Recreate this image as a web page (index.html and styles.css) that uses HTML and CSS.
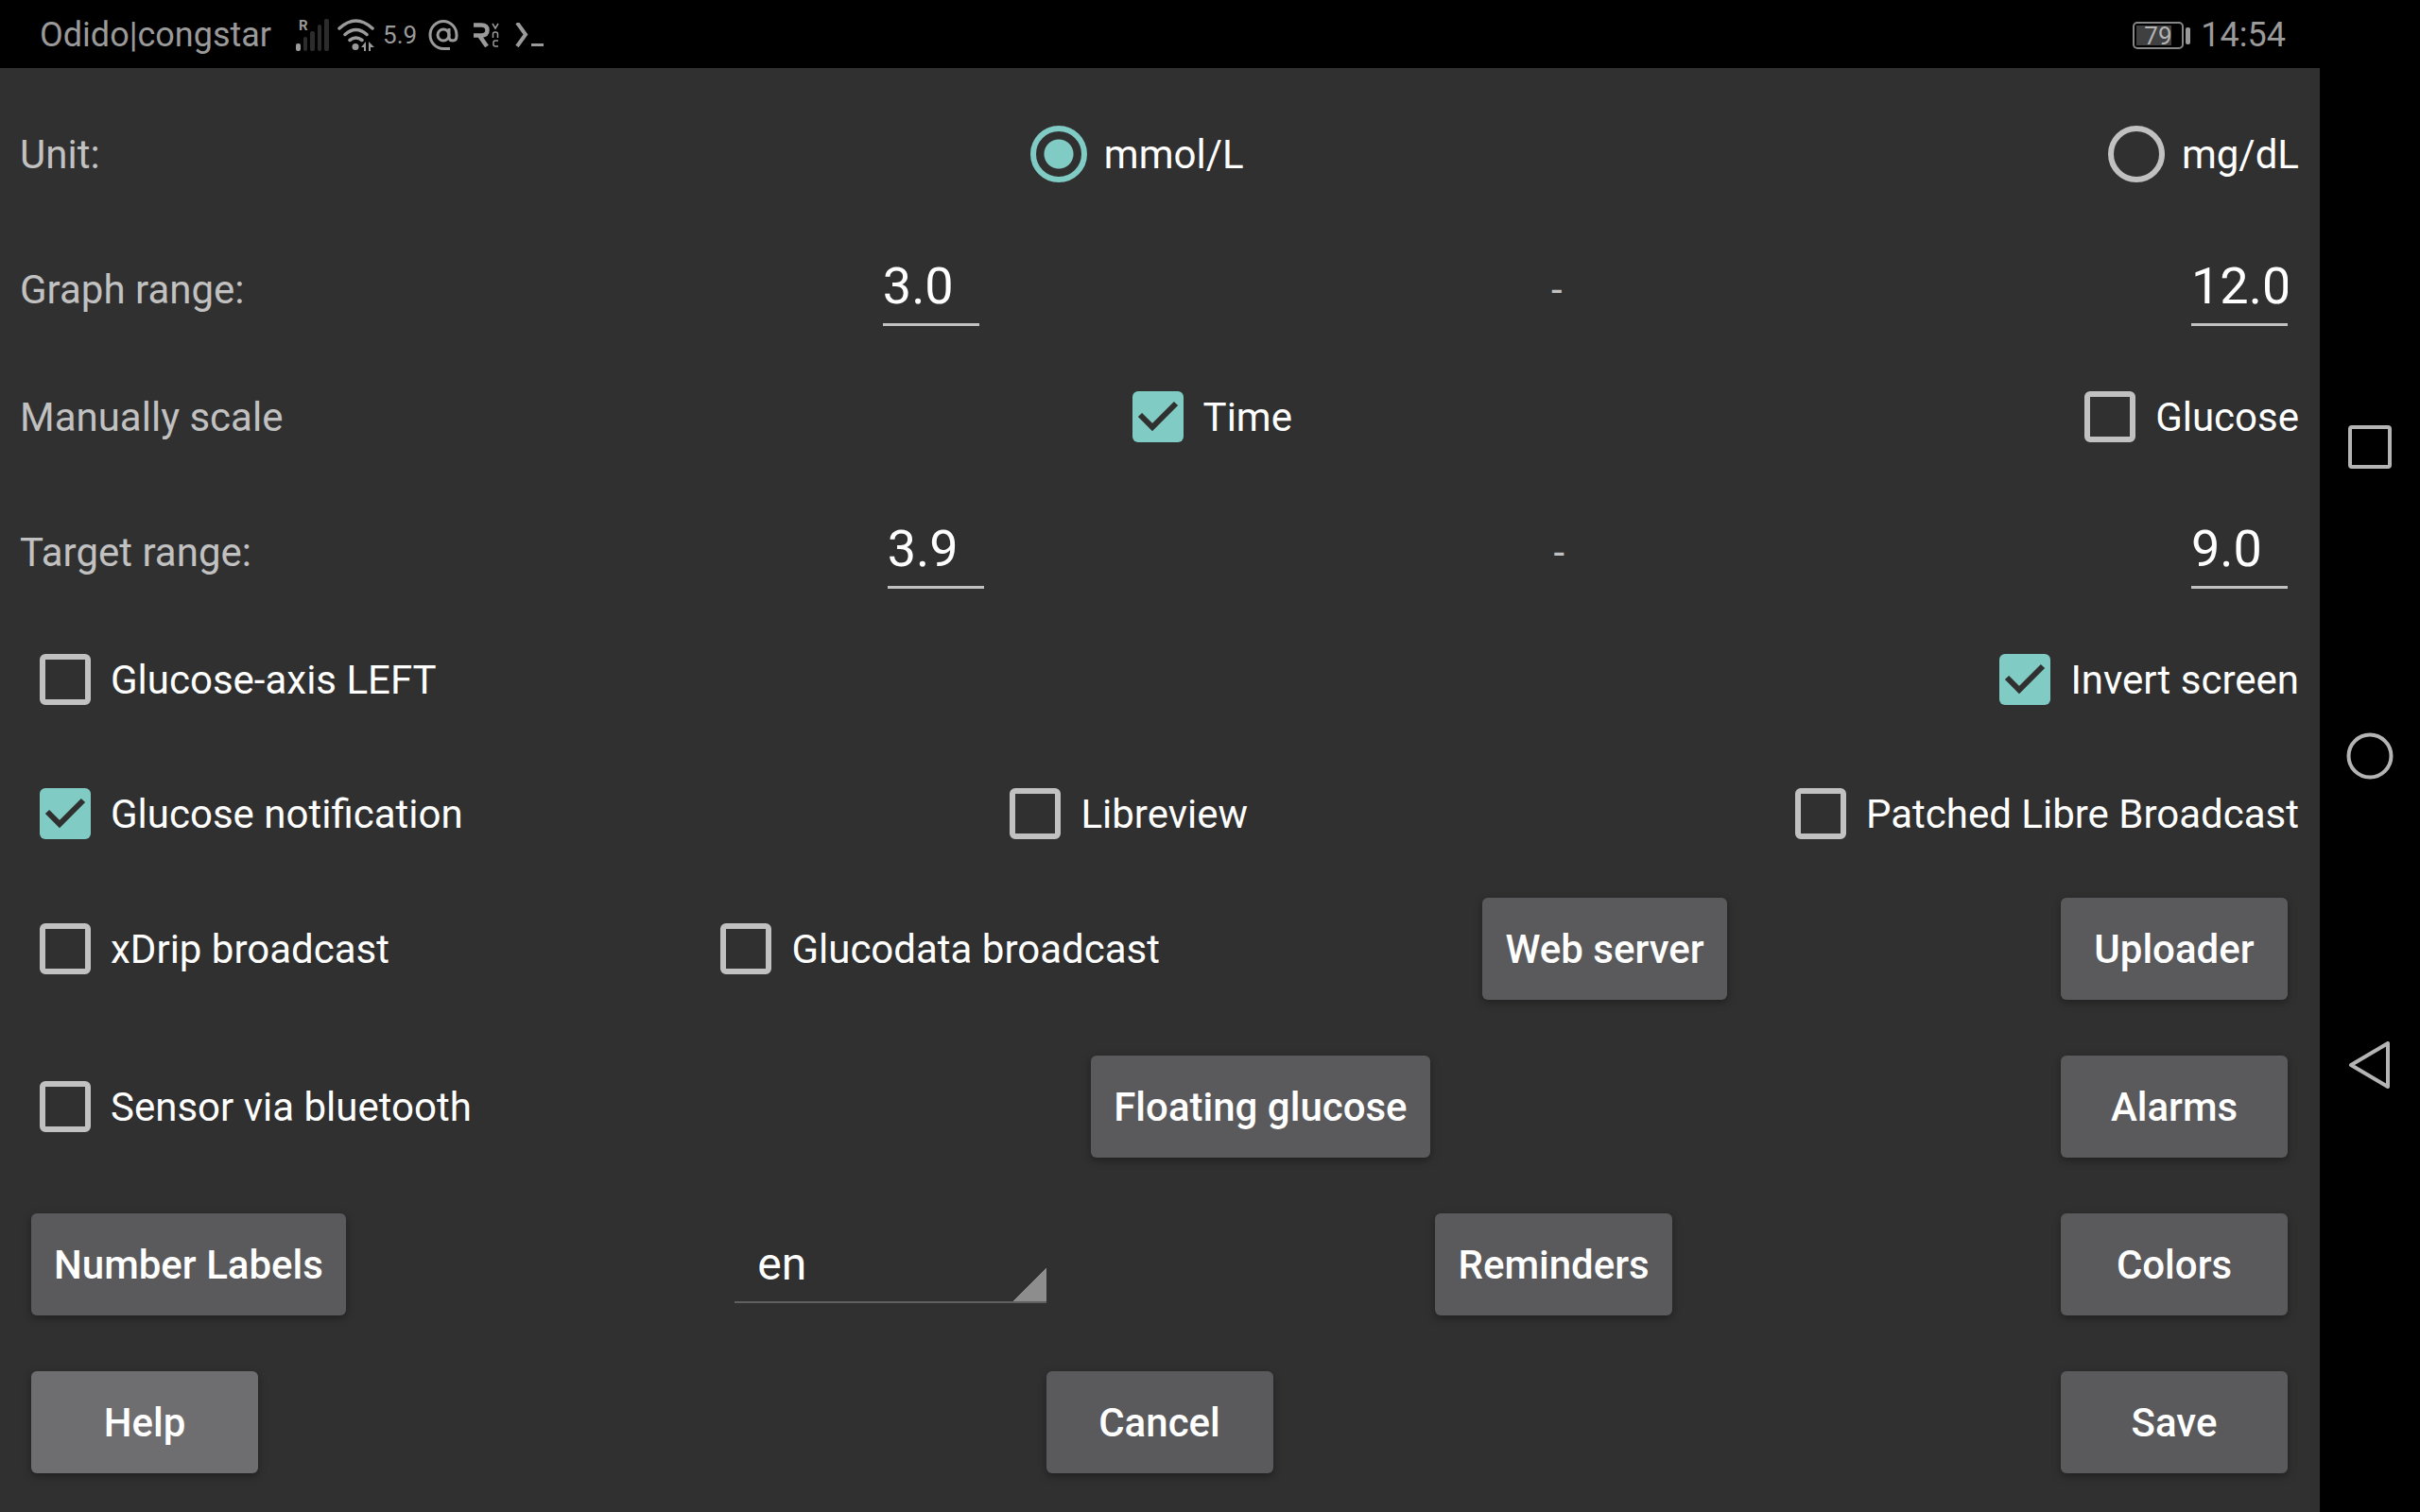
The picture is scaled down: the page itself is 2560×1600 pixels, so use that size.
FILE: index.html
```html
<!DOCTYPE html>
<html lang="en">
<head>
<meta charset="utf-8">
<title>Settings</title>
<link rel="stylesheet" href="styles.css">
</head>
<body>
<div class="screen">
  <div class="window">
    <header class="status">
      <div class="status-left">
        <span class="carrier">Odido|congstar</span>
        <svg class="signal" width="36" height="34" viewBox="0 0 36 34" aria-hidden="true">
          <text class="roam" x="3" y="12">R</text>
          <rect x="0" y="26" width="5" height="8" rx="2" fill="#9a9a9a"/>
          <g fill="#2c2c2c"><rect x="8" y="19" width="4" height="15" rx="2"/><rect x="15" y="13" width="5" height="21" rx="2"/><rect x="23" y="6" width="4" height="28" rx="2"/><rect x="30" y="0" width="5" height="34" rx="2"/></g>
        </svg>
        <svg class="wifi" width="40" height="34" viewBox="0 0 40 34" aria-hidden="true">
          <g fill="none" stroke="#9a9a9a" stroke-width="3.500" stroke-linecap="round"><path d="M2 10Q19.500 -6 37 10M8 16.500Q19.500 6.500 31 16.500M13 22.500Q19.500 17.500 26 22.500"/></g>
          <circle cx="19" cy="29.500" r="3.500" fill="#9a9a9a"/>
          <path d="M25 30l5-6v10h-2v-4zM33 24v10h2v-4h4z" fill="#9a9a9a"/>
        </svg>
        <span class="glucose">5.9</span>
        <svg class="at" width="32" height="32" viewBox="0 0 32 32" aria-hidden="true">
          <g fill="none" stroke="#9a9a9a" stroke-width="3"><path d="M23 30.500H16A14 14.500 0 1 1 30 16v1Q30 22 26 22T22 18V9"/><circle cx="16" cy="16" r="6"/></g>
        </svg>
        <svg class="vnc" width="28" height="26" viewBox="0 0 28 26" aria-hidden="true">
          <path d="M0 2.500H8Q14.500 2.500 14.500 8T8 13.500H6L14 25M0 13.500H7" fill="none" stroke="#9a9a9a" stroke-width="4.500"/>
          <path d="M20 1l3 5 3-5M20.500 16v-4q0-2 2-2h1q2 0 2 2v4M26 19h-3q-2 0-2 2v2q0 2 2 2h3" fill="none" stroke="#9a9a9a" stroke-width="1.500"/>
        </svg>
        <svg class="term" width="32" height="26" viewBox="0 0 32 26" aria-hidden="true">
          <path d="M2 0l9 12.500L2 25" fill="none" stroke="#9a9a9a" stroke-width="4"/><path d="M17 22h13v3H17z" fill="#9a9a9a"/>
        </svg>
      </div>
      <div class="status-right">
        <span class="battery"><span class="battery-level">79</span></span>
        <time>14:54</time>
      </div>
    </header>

    <form class="settings">
      <div class="row">
        <span class="caption colon">Unit:</span>
        <label class="option"><input type="radio" name="unit" checked>mmol/L</label>
        <label class="option"><input type="radio" name="unit">mg/dL</label>
      </div>
      <div class="row row-range">
        <span class="caption colon">Graph range:</span>
        <input class="field" type="text" value="3.0" aria-label="Graph range from">
        <span class="caption">-</span>
        <input class="field" type="text" value="12.0" aria-label="Graph range to">
      </div>
      <div class="row">
        <span class="caption">Manually scale</span>
        <label class="option"><input type="checkbox" checked>Time</label>
        <label class="option"><input type="checkbox">Glucose</label>
      </div>
      <div class="row row-range">
        <span class="caption colon">Target range:</span>
        <input class="field" type="text" value="3.9" aria-label="Target range from">
        <span class="caption">-</span>
        <input class="field" type="text" value="9.0" aria-label="Target range to">
      </div>
      <div class="row row-spaced">
        <label class="option"><input type="checkbox">Glucose-axis LEFT</label>
        <label class="option"><input type="checkbox" checked>Invert screen</label>
      </div>
      <div class="row">
        <label class="option"><input type="checkbox" checked>Glucose notification</label>
        <label class="option"><input type="checkbox">Libreview</label>
        <label class="option"><input type="checkbox">Patched Libre Broadcast</label>
      </div>
      <div class="row">
        <label class="option"><input type="checkbox">xDrip broadcast</label>
        <label class="option"><input type="checkbox">Glucodata broadcast</label>
        <button class="btn" type="button">Web server</button>
        <button class="btn" type="button">Uploader</button>
      </div>
      <div class="row">
        <label class="option"><input type="checkbox">Sensor via bluetooth</label>
        <button class="btn" type="button">Floating glucose</button>
        <button class="btn" type="button">Alarms</button>
      </div>
      <div class="row">
        <button class="btn" type="button">Number Labels</button>
        <select class="language" aria-label="Language"><option>en</option></select>
        <button class="btn" type="button">Reminders</button>
        <button class="btn" type="button">Colors</button>
      </div>
      <div class="row">
        <button class="btn btn-focused" type="button">Help</button>
        <button class="btn" type="button">Cancel</button>
        <button class="btn" type="button">Save</button>
      </div>
    </form>
  </div>

  <nav class="navbar">
    <button type="button" aria-label="Recent apps"><svg width="50" height="50" viewBox="0 0 50 50"><rect x="4" y="4" width="42" height="42" rx="2"/></svg></button>
    <button type="button" aria-label="Home"><svg width="50" height="50" viewBox="0 0 50 50"><circle cx="25" cy="25" r="22.500"/></svg></button>
    <button type="button" aria-label="Back"><svg width="50" height="50" viewBox="0 0 50 50"><path d="M5 25L44 2V48Z"/></svg></button>
  </nav>
</div>
</body>
</html>
```
FILE: styles.css
```css
* {
  box-sizing: border-box;
}

body {
  margin: 0;
  background: #000;
  color: #fff;
  font-family: Roboto, "Liberation Sans", sans-serif;
  font-size: 42px;
}

button,
input,
select {
  margin: 0;
  font: inherit;
  color: inherit;
}

.screen {
  display: flex;
  min-height: 100vh;
}

.window {
  flex: 1;
  display: flex;
  flex-direction: column;
}

/* Status bar */
.status {
  display: flex;
  justify-content: space-between;
  align-items: center;
  height: 72px;
  padding: 2px 36px 0 42px;
  color: #9a9a9a;
  font-size: 36px;
}

.status-left,
.status-right {
  display: flex;
  align-items: center;
}

.carrier {
  margin-right: 26px;
}

.signal {
  overflow: visible;
}

.roam {
  font-size: 15px;
  font-weight: 700;
  fill: #9a9a9a;
}

.wifi {
  margin: 0 8px;
}

.glucose {
  font-size: 26px;
}

.at {
  margin: 0 16px 0 12px;
}

.term {
  margin-left: 16px;
}

.battery {
  display: flex;
  position: relative;
  width: 54px;
  height: 29px;
  margin-right: 18px;
  padding: 2px;
  border: 2px solid #868686;
  border-radius: 5px;
}

.battery::after {
  content: "";
  position: absolute;
  top: 4px;
  right: -9px;
  width: 5px;
  height: 18px;
  border-radius: 2px;
  background: #9a9a9a;
}

.battery-level {
  width: 79%;
  padding-left: 8px;
  background: #404040;
  color: #b4b4b4;
  font-size: 26px;
  line-height: 22px;
}

/* Settings form */
.settings {
  flex: 1;
  display: flex;
  flex-direction: column;
  gap: 23px;
  padding: 43px 22px 23px 21px;
  background: #303030;
}

.row {
  display: flex;
  justify-content: space-between;
  align-items: center;
  min-height: 96px;
}

.row-range {
  align-items: baseline;
}

.row-spaced {
  margin-bottom: 23px;
}

.caption {
  padding-right: 60px;
  color: #c1c1c1;
}

.colon {
  padding-right: 70px;
}

.option {
  display: flex;
  align-items: center;
  white-space: nowrap;
}

.option input {
  appearance: none;
  width: 54px;
  height: 54px;
  margin: 0 21px;
  border: 6px solid #c1c1c1;
  border-radius: 6px;
}

.option input[type="radio"] {
  width: 60px;
  height: 60px;
  margin: 0 18px;
  border-radius: 50%;
}

.option input:checked {
  border-color: #80cbc4;
}

.option input[type="radio"]:checked {
  background: radial-gradient(circle, #80cbc4 15px, transparent 16px);
}

.option input[type="checkbox"]:checked {
  border: 0;
  background: #80cbc4 url("data:image/svg+xml,%3Csvg xmlns='http://www.w3.org/2000/svg' viewBox='0 0 54 54'%3E%3Cpath d='M8 25L21 38L46 13' fill='none' stroke='%23303030' stroke-width='6'/%3E%3C/svg%3E");
}

.field {
  width: 126px;
  height: 136px;
  padding: 18px 12px;
  border: 0;
  background: linear-gradient(#c1c1c1, #c1c1c1) center bottom 25px / calc(100% - 24px) 3px no-repeat;
  font-size: 54px;
}

.btn {
  min-width: 240px;
  height: 108px;
  margin: 18px 12px;
  padding: 0 24px;
  border: 0;
  border-radius: 6px;
  background: #5a5a5c;
  box-shadow: 0 3px 8px rgba(0, 0, 0, 0.35);
  font-weight: 500;
}

.btn-focused {
  background: #6e6e70;
}

.language {
  appearance: none;
  width: 330px;
  height: 82px;
  margin: 0 12px;
  padding: 0 24px;
  border: 0;
  border-bottom: 2px solid #606060;
  border-radius: 0;
  background: linear-gradient(135deg, transparent 50%, #8d8d8d 50%) right bottom / 36px 36px no-repeat;
  font-size: 48px;
}

/* System navigation */
.navbar {
  display: flex;
  flex-direction: column;
  justify-content: center;
  gap: 221px;
  width: 106px;
}

.navbar button {
  height: 106px;
  padding: 0;
  border: 0;
  background: none;
}

.navbar svg {
  display: block;
  margin: auto;
  fill: none;
  stroke: #b4b4b4;
  stroke-width: 4;
  stroke-linejoin: round;
}
```
